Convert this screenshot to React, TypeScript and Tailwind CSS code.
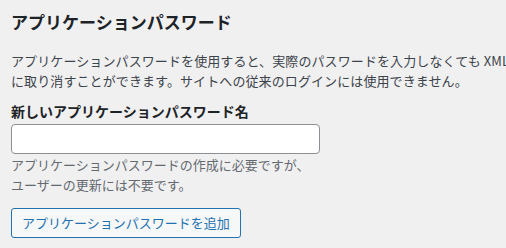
export default function App() {
  return (
    <div
      className="h-[248px] w-[506px] overflow-hidden bg-[#f0f0f1] px-[11px] text-[#3c434a]"
      style={{ fontFamily: '"Noto Sans CJK JP", "Noto Sans", sans-serif' }}
    >
      <h2 className="pt-[11px] text-[17px] font-bold leading-[22px] text-[#1d2327]">
        アプリケーションパスワード
      </h2>
      <p className="mt-[18px] whitespace-nowrap text-[13px] leading-[19.5px] tracking-[0.1px]">
        <span className="block">
          アプリケーションパスワードを使用すると、実際のパスワードを入力しなくても XML-RPC や REST API などの非対話型システムを介した認証が可能になります。いつでも簡単
        </span>
        <span className="block">に取り消すことができます。サイトへの従来のログインには使用できません。</span>
      </p>
      <div className="mt-[11px]">
        <label className="block text-[14px] font-bold leading-[21px] text-[#1d2327]">
          新しいアプリケーションパスワード名
        </label>
        <input
          type="text"
          className="mt-[2px] block h-[30px] w-[309px] rounded-[4px] border border-[#8c8f94] bg-white px-2 text-[14px] outline-none"
        />
        <p className="mt-[1px] w-[309px] text-[13px] leading-[19.5px] text-[#646970]">
          アプリケーションパスワードの作成に必要ですが、ユーザーの更新には不要です。
        </p>
      </div>
      <button
        type="button"
        className="mt-[14px] h-[30px] rounded-[3px] border border-[#2271b1] bg-[#f6f7f7] px-[10px] text-[13px] leading-[28px] text-[#2271b1]"
      >
        アプリケーションパスワードを追加
      </button>
    </div>
  );
}
